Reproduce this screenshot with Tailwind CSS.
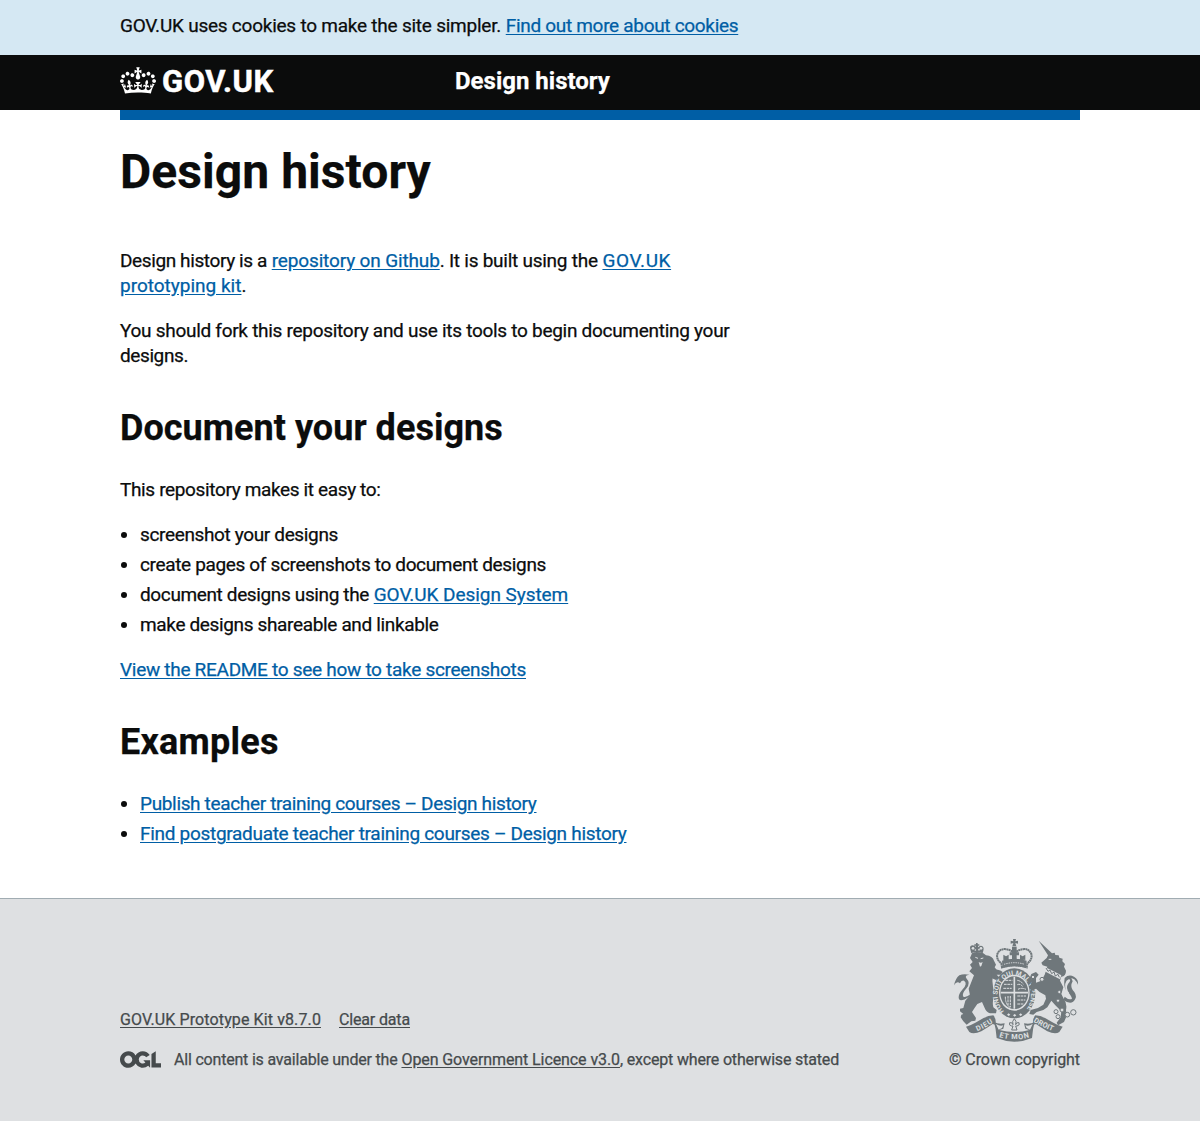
<!DOCTYPE html>
<html lang="en">
<head>
<meta charset="utf-8">
<title>Design history</title>
<script src="https://cdn.jsdelivr.net/npm/@tailwindcss/browser@4"></script>
</head>
<body class="bg-white font-['Roboto',sans-serif] text-[19px] leading-[25px] text-[#0b0c0c] [-webkit-text-stroke:0.25px]">
<div class="h-[55px] bg-[#d5e8f3]">
  <p class="mx-auto w-[960px] pt-[13px]"><span class="tracking-[-0.235px]">GOV.UK uses cookies to make the site simpler.</span> <a class="tracking-[-0.308px] text-[#005ea5] underline underline-offset-2">Find out more about cookies</a></p>
</div>
<header class="h-[55px] bg-[#0b0c0c] font-bold text-white">
  <div class="mx-auto flex w-[960px]">
    <div class="flex w-[335px] gap-[6px] pt-[12px]">
      <svg class="h-[27px] w-[36px]" viewBox="0 0 132 97" fill="currentColor"><path d="M25 30.2c3.5 1.5 7.7-.2 9.1-3.7 1.5-3.6-.2-7.8-3.9-9.2-3.6-1.4-7.6.3-9.1 3.9-1.4 3.5.3 7.5 3.9 9zM9 39.5c3.6 1.5 7.8-.2 9.2-3.7 1.5-3.6-.2-7.8-3.9-9.1-3.6-1.5-7.6.2-9.1 3.8-1.4 3.5.3 7.5 3.8 9zM4.4 57.2c3.5 1.5 7.7-.2 9.1-3.8 1.5-3.6-.2-7.7-3.9-9.1-3.5-1.5-7.6.3-9.1 3.8-1.4 3.5.3 7.6 3.9 9.1zm38.3-21.4c3.5 1.5 7.7-.2 9.1-3.8 1.5-3.6-.2-7.7-3.9-9.1-3.6-1.5-7.6.3-9.1 3.8-1.3 3.6.4 7.7 3.9 9.1zm64.4-5.6c-3.6 1.5-7.8-.2-9.1-3.7-1.5-3.6.2-7.8 3.8-9.2 3.6-1.4 7.7.3 9.2 3.9 1.3 3.5-.4 7.5-3.9 9zm15.9 9.3c-3.6 1.5-7.7-.2-9.1-3.7-1.5-3.6.2-7.8 3.7-9.1 3.6-1.5 7.7.2 9.2 3.8 1.5 3.5-.3 7.5-3.8 9zm4.7 17.7c-3.6 1.5-7.8-.2-9.2-3.8-1.5-3.6.2-7.7 3.9-9.1 3.6-1.5 7.7.3 9.2 3.8 1.3 3.5-.4 7.6-3.9 9.1zM89.3 35.8c-3.6 1.5-7.8-.2-9.2-3.8-1.4-3.6.2-7.7 3.9-9.1 3.6-1.5 7.7.3 9.2 3.8 1.4 3.6-.3 7.7-3.9 9.1zM69.7 17.7l8.9 4.7V9.3l-8.9 2.8c-.2-.3-.5-.6-.9-.9L72.4 0H59.6l3.5 11.2c-.3.3-.6.5-.9.9l-8.8-2.8v13.1l8.8-4.7c.3.3.6.7.9.9l-5 15.4v.1c-.2.8-.4 1.6-.4 2.4 0 4.1 3.1 7.5 7 8.1h.2c.3 0 .7.1 1 .1.4 0 .7 0 1-.1h.2c4-.6 7.1-4.1 7.1-8.1 0-.8-.1-1.7-.4-2.4V34l-5.1-15.4c.4-.2.7-.6 1-.9zM66 92.8c16.9 0 32.8 1.1 47.1 3.2 4-16.9 8.9-26.7 14-33.5l-9.6-3.4c1 4.9 1.1 7.2 0 10.2-1.5-1.4-3-4.3-4.2-8.7L108.6 76c2.8-2 5-3.2 7.5-3.3-4.4 9.4-10 11.9-13.6 11.2-4.3-.8-6.3-4.6-5.6-7.9 1-4.7 5.7-5.9 8-.5 4.3-8.7-3-11.4-7.6-8.8 7.1-7.2 7.9-13.5 2.1-21.1-8 6.1-8.1 12.3-4.5 20.8-4.7-5.4-12.1-2.5-9.5 6.2 3.4-5.2 7.9-2 7.2 3.1-.6 4.3-6.4 7.8-13.5 7.2-10.3-.9-10.9-8-11.2-13.8 2.5-.5 7.1 1.8 11 7.3L80.2 60c-4.1 4.4-8 5.3-12.3 5.4 1.4-4.4 8-11.6 8-11.6H55.5s6.4 7.2 7.9 11.6c-4.2-.1-8-1-12.3-5.4l1.4 16.4c3.9-5.5 8.5-7.7 10.9-7.3-.3 5.8-.9 12.8-11.1 13.8-7.2.6-12.9-2.9-13.5-7.2-.7-5 3.8-8.3 7.1-3.1 2.7-8.7-4.6-11.6-9.4-6.2 3.7-8.5 3.6-14.7-4.6-20.8-5.8 7.6-5 13.9 2.2 21.1-4.7-2.6-11.9.1-7.7 8.8 2.3-5.5 7.1-4.2 8.1.5.7 3.3-1.3 7.1-5.7 7.9-3.5.7-9-1.8-13.5-11.2 2.5.1 4.7 1.3 7.5 3.3l-4.7-15.4c-1.2 4.4-2.7 7.2-4.3 8.7-1.1-3-.9-5.3 0-10.2l-9.5 3.4c5 6.9 9.9 16.7 14 33.5 14.8-2.1 30.8-3.2 47.7-3.2z"/></svg>
      <span class="text-[31px] leading-[30px] tracking-[0.6px] [-webkit-text-stroke:0.5px]">GOV.UK</span>
    </div>
    <span class="pt-[11px] text-[24px] leading-[30px]">Design history</span>
  </div>
</header>
<main class="mx-auto h-[788px] w-[960px] border-t-10 border-[#005ea5] pt-[27px]">
  <h1 class="text-[48px] leading-[50px] font-bold tracking-[0.06px]">Design history</h1>
  <p class="mt-[51px]"><span class="tracking-[-0.389px]">Design history is a</span> <a class="tracking-[-0.144px] text-[#005ea5] underline underline-offset-2">repository on Github</a><span class="tracking-[-0.253px]">. It is built using the</span> <a class="tracking-[0.6px] text-[#005ea5] underline underline-offset-2">GOV.UK</a><br><a class="text-[#005ea5] underline underline-offset-2">prototyping kit</a>.</p>
  <p class="mt-5 tracking-[-0.284px]">You should fork this repository and use its tools to begin documenting your<br><span class="tracking-[-0.4px]">designs.</span></p>
  <h2 class="mt-[40px] text-[36px] leading-[40px] font-bold tracking-[0.04px]">Document your designs</h2>
  <p class="mt-[29px] tracking-[-0.359px]">This repository makes it easy to:</p>
  <ul class="mt-5 list-disc space-y-[5px] pl-5">
    <li class="tracking-[-0.357px]">screenshot your designs</li>
    <li class="tracking-[-0.35px]">create pages of screenshots to document designs</li>
    <li><span class="tracking-[-0.368px]">document designs using the</span> <a class="tracking-[-0.059px] text-[#005ea5] underline underline-offset-2">GOV.UK Design System</a></li>
    <li class="tracking-[-0.352px]">make designs shareable and linkable</li>
  </ul>
  <p class="mt-5"><a class="tracking-[-0.292px] text-[#005ea5] underline underline-offset-2">View the README to see how to take screenshots</a></p>
  <h2 class="mt-[40px] text-[36px] leading-[40px] font-bold tracking-[0.25px]">Examples</h2>
  <ul class="mt-[29px] list-disc space-y-[5px] pl-5">
    <li><a class="tracking-[-0.343px] text-[#005ea5] underline underline-offset-2">Publish teacher training courses – Design history</a></li>
    <li><a class="tracking-[-0.299px] text-[#005ea5] underline underline-offset-2">Find postgraduate teacher training courses – Design history</a></li>
  </ul>
</main>
<footer class="h-[223px] border-t border-[#a1acb2] bg-[#dee0e2] text-[16px] leading-[20px] text-[#454a4c]">
  <div class="mx-auto flex w-[960px] justify-between pt-[39px]">
    <div class="pt-[72px]">
      <p class="flex gap-[18px]"><a class="tracking-[0.111px] underline underline-offset-2">GOV.UK Prototype Kit v8.7.0</a><a class="tracking-[-0.155px] underline underline-offset-2">Clear data</a></p>
      <div class="mt-5 flex">
        <svg class="mt-[1px] mr-[13px] h-[17px] w-[41px]" viewBox="0 0 483.2 195.7" fill="currentColor" stroke="none"><path d="M421.5 142.8V.1l-50.7 32.3v161.1h112.4v-50.7zm-122.3-9.6A47.12 47.12 0 0 1 221 97.8c0-26 21.1-47.1 47.1-47.1 16.7 0 31.4 8.7 39.7 21.8l42.7-27.2A97.63 97.63 0 0 0 268.1 0c-36.5 0-68.3 20.1-85.1 49.7A98 98 0 0 0 97.8 0C43.9 0 0 43.9 0 97.8s43.9 97.8 97.8 97.8c36.5 0 68.3-20.1 85.1-49.7a97.76 97.76 0 0 0 149.6 25.4l19.4 22.2h3v-87.8h-80l24.3 27.5zM97.8 145c-26 0-47.1-21.1-47.1-47.1s21.1-47.1 47.1-47.1 47.1 21.1 47.1 47.1S123.8 145 97.8 145"/></svg>
        <p><span class="tracking-[-0.198px]">All content is available under the</span> <a class="tracking-[-0.094px] underline underline-offset-2">Open Government Licence v3.0</a><span class="tracking-[-0.169px]">, except where otherwise stated</span></p>
      </div>
    </div>
    <div class="text-right">
      <svg class="ml-auto h-[104px] w-[130px]" viewBox="26 24 390 312" fill="#6f777b" stroke="none" font-family="Roboto, sans-serif">
        <!-- lion -->
        <path d="M92 70Q104 62 126 70L134 76Q154 78 158 92L164 104L160 112L168 122Q150 136 154 160L158 200Q152 216 156 232L166 240L164 250L146 250Q134 246 130 234L122 216L108 222Q98 236 92 246L104 264L102 272L90 274L76 284L66 274L58 262L60 254L66 252L56 244L56 236L66 234L72 212L86 196L82 176L90 156L98 136L84 124L92 114L86 104L94 96L86 84Z"/>
        <path d="M84 200Q52 220 52 202Q52 192 64 178Q80 160 68 152Q60 150 56 160Q46 152 38 166Q42 146 54 136Q66 130 84 134Q68 136 76 146Q88 158 76 174Q60 192 66 200Q74 204 88 192Z"/>
        <path d="M150 118Q172 116 184 126L178 134L166 134L176 144L164 150L150 144Z"/>
        <path d="M90 70L86 54Q86 46 94 46Q100 46 104 52L103 47H99V43H104V39H109V43H114V47H110V52Q116 45 122 48Q129 52 126 62L124 70Q104 62 90 70Z"/>
        <path d="M102 82l8 3M118 86l8-2" stroke="#dee0e2" stroke-width="3"/>
        <path d="M112 96q6 4 12 0l-4 12-4 2z" fill="#dee0e2"/>
        <g fill="#dee0e2"><circle cx="95" cy="55" r="4"/><circle cx="102" cy="60" r="2.5"/><circle cx="113" cy="59" r="2.5"/><circle cx="119" cy="55" r="4"/></g>
        <!-- crown -->
        <path d="M215 27h9l-2 7 8-2v9l-8-2 3 10h-12l3-10-8 2v-9l8 2z"/>
        <path d="M182 112L180 100Q164 88 168 72Q176 54 196 58Q210 60 219 70Q228 60 244 58Q262 54 270 72Q274 88 258 100L256 112Q219 100 182 112Z" fill="#dee0e2" stroke="#6f777b" stroke-width="6" stroke-dasharray="6 1"/>
        <path d="M182 92Q219 80 256 92L254 114Q219 104 184 114ZM212 50h14v38h-14zM205 67h28v9h-28zM186 74l8 5 8-5v16l-16 2zM236 74l8 5 8-5v16l-16-2z"/>
        <path d="M188 103Q219 93 250 103" fill="none" stroke="#dee0e2" stroke-width="3" stroke-dasharray="4 3"/>
        <!-- garter and shield -->
        <ellipse cx="219" cy="190" rx="63" ry="75"/>
        <ellipse cx="219" cy="188" rx="46" ry="54" fill="#dee0e2"/>
        <ellipse cx="219" cy="188" rx="42" ry="49"/>
        <path d="M219 140v96M178 188h82" stroke="#dee0e2" stroke-width="5"/>
        <path d="M188 163h25M186 175h25M192 151h21M228 151q12 2 18 12M228 164q10-4 16 6M230 178q10-6 24 0M228 198h26M228 210h24M228 222h18M192 200q0 24 14 32M200 198v28M207 198v34" stroke="#dee0e2" stroke-width="3" stroke-dasharray="8 2" fill="none"/>
        <path id="garter" d="M188 243A50 60 0 1 1 250 243" fill="none"/>
        <text fill="#dee0e2" font-size="20" font-weight="700"><textPath href="#garter" textLength="268" lengthAdjust="spacing">HONI SOIT QUI MAL Y PENSE</textPath></text>
        <path d="M202 250l5 4-5 4-5-4zM220 252l5 4-5 4-5-4zM238 250l5 4-5 4-5-4z" fill="#dee0e2"/>
        <!-- unicorn -->
        <path d="M292 32L332 70L340 68L342 75L352 76L354 83L364 86L363 94L371 102L368 110L374 122Q374 138 360 140L356 152L366 172L360 192L368 208Q378 220 374 240L376 258L368 276L350 286L346 278L358 262L360 244L342 226L330 212L318 232L306 240L286 246L276 254L264 252L268 240L290 234L306 224L314 206L312 196Q294 188 284 176L270 184L266 172L272 150L264 146L270 132L284 126L292 134L284 144L284 158L300 152L310 134L318 110L304 106L300 98L316 84L320 76Z"/>
        <path d="M366 210Q392 228 402 206Q408 194 394 180Q386 168 394 154L390 144Q400 146 406 156L410 164Q412 148 398 140Q382 132 370 144Q366 168 374 180Q390 196 392 206Q384 212 370 200Z"/>
        <path d="M374 188Q366 154 382 148Q392 148 380 162Q372 174 384 190Z" fill="#dee0e2"/>
        <path d="M312 112Q334 122 360 136L356 148Q332 136 310 124Z" fill="#dee0e2"/>
        <path d="M314 114l6 10 6-4 5 11 7-5 4 12 8-5 4 9" fill="none" stroke="#6f777b" stroke-width="3"/>
        <path d="M322 88l8 0" stroke="#dee0e2" stroke-width="3"/>
        <g fill="#dee0e2" stroke="#6f777b" stroke-width="3"><circle cx="275" cy="141" r="5"/><circle cx="302" cy="148" r="6"/><circle cx="354" cy="186" r="5"/><circle cx="350" cy="212" r="5"/><circle cx="344" cy="245" r="6"/><circle cx="350" cy="260" r="6"/><circle cx="362" cy="240" r="6"/><circle cx="378" cy="254" r="7"/><circle cx="396" cy="247" r="8"/></g>
        <!-- ribbon -->
        <path d="M74 290Q92 284 102 278Q130 258 156 256Q166 268 162 284L154 282Q140 292 120 304Q96 314 84 306Z"/>
        <path d="M364 290Q346 284 336 278Q308 258 282 256Q272 268 276 284L284 282Q298 292 318 304Q342 314 354 306Z"/>
        <path d="M158 276Q172 284 190 280L186 296L174 300Q219 312 264 300L252 296L248 280Q266 284 280 276Q274 296 272 324Q219 346 166 324Q164 296 158 276Z"/>
        <path d="M164 282Q176 290 186 286L182 294L172 299ZM274 282Q262 290 252 286L256 294L266 299Z" fill="#dee0e2"/>
        <path id="left" d="M108 304Q136 292 160 275" fill="none"/><path id="right" d="M276 275Q304 292 340 306" fill="none"/><path id="base" d="M173 321Q219 336 267 321" fill="none"/>
        <g fill="#dee0e2" font-size="22" font-weight="700"><text><textPath href="#left" textLength="54">DIEU</textPath></text><text><textPath href="#right" textLength="64">DROIT</textPath></text><text><textPath href="#base" textLength="92">ET MON</textPath></text></g>
        <path d="M219 266q8 8 4 18 2-8 10-6 4 8-6 10h-4l4 12h-16l4-12h-4q-10-2-6-10 8-2 10 6-4-10 4-18z" fill="#dee0e2" stroke="#6f777b" stroke-width="3"/>
      </svg>
      <p class="mt-[8px] tracking-[-0.087px]">© Crown copyright</p>
    </div>
  </div>
</footer>
</body></html>
